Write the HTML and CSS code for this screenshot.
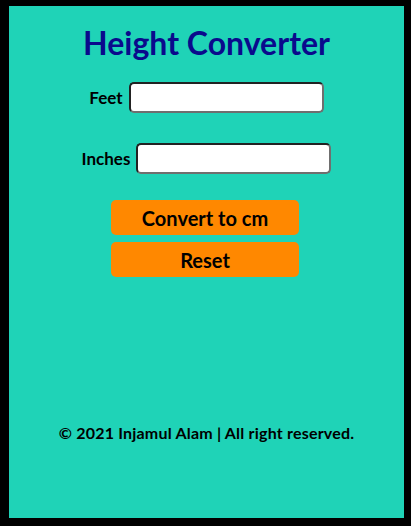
FILE: index.html
```html
<!DOCTYPE html>
<html>
<head>
<meta charset="utf-8">
<title>Height Converter</title>
<link rel="stylesheet" href="styles.css">
</head>
<body>
<div class="panel">
  <h1 class="title">Height Converter</h1>
  <div class="row row-feet">
    <label class="label" for="feet">Feet</label>
    <input class="field" id="feet" type="text">
  </div>
  <div class="row row-inches">
    <label class="label" for="inches">Inches</label>
    <input class="field" id="inches" type="text">
  </div>
  <div class="buttons">
    <button class="btn">Convert to cm</button>
    <button class="btn">Reset</button>
  </div>
  <div class="spacer"></div>
  <p class="footer">© 2021 Injamul Alam | All right reserved.</p>
</div>
</body>
</html>
```

FILE: styles.css
```css
html, body {
  margin: 0;
  padding: 0;
  background: #000;
}
body {
  padding: 6px 7px 8px 9px;
  height: 526px;
  box-sizing: border-box;
}
.panel {
  height: 512px;
  background: #1fd3b7;
  display: flex;
  flex-direction: column;
  align-items: center;
  font-family: "Lato", sans-serif;
  color: #000;
}
.title {
  margin: 17px 0 0;
  font-size: 32px;
  line-height: 40px;
  font-weight: 700;
  color: #0a0a8c;
}
.row {
  display: flex;
  align-items: center;
  gap: 6px;
}
.row-feet {
  margin-top: 19px;
}
.row-inches {
  margin-top: 30px;
}
.label {
  font-size: 17px;
  font-weight: 700;
}
.field {
  width: 195px;
  height: 31px;
  box-sizing: border-box;
  border: 2px solid;
  border-top-color: #222;
  border-left-color: #222;
  border-right-color: #6f6f6f;
  border-bottom-color: #6f6f6f;
  border-radius: 5px;
  background: #fff;
  margin: 0;
  padding: 1px 4px;
}
.buttons {
  margin-top: 26px;
  display: flex;
  flex-direction: column;
  gap: 7px;
}
.btn {
  width: 188px;
  height: 35px;
  background: #ff8800;
  border: none;
  border-radius: 5px;
  font-family: "Lato", sans-serif;
  font-size: 20px;
  font-weight: 700;
  color: #000;
  padding: 0;
  margin-left: -3px;
}
.spacer {
  flex: 1;
}
.footer {
  margin: 0 0 76px;
  font-size: 16px;
  font-weight: 700;
  letter-spacing: 0.2px;
}
```
